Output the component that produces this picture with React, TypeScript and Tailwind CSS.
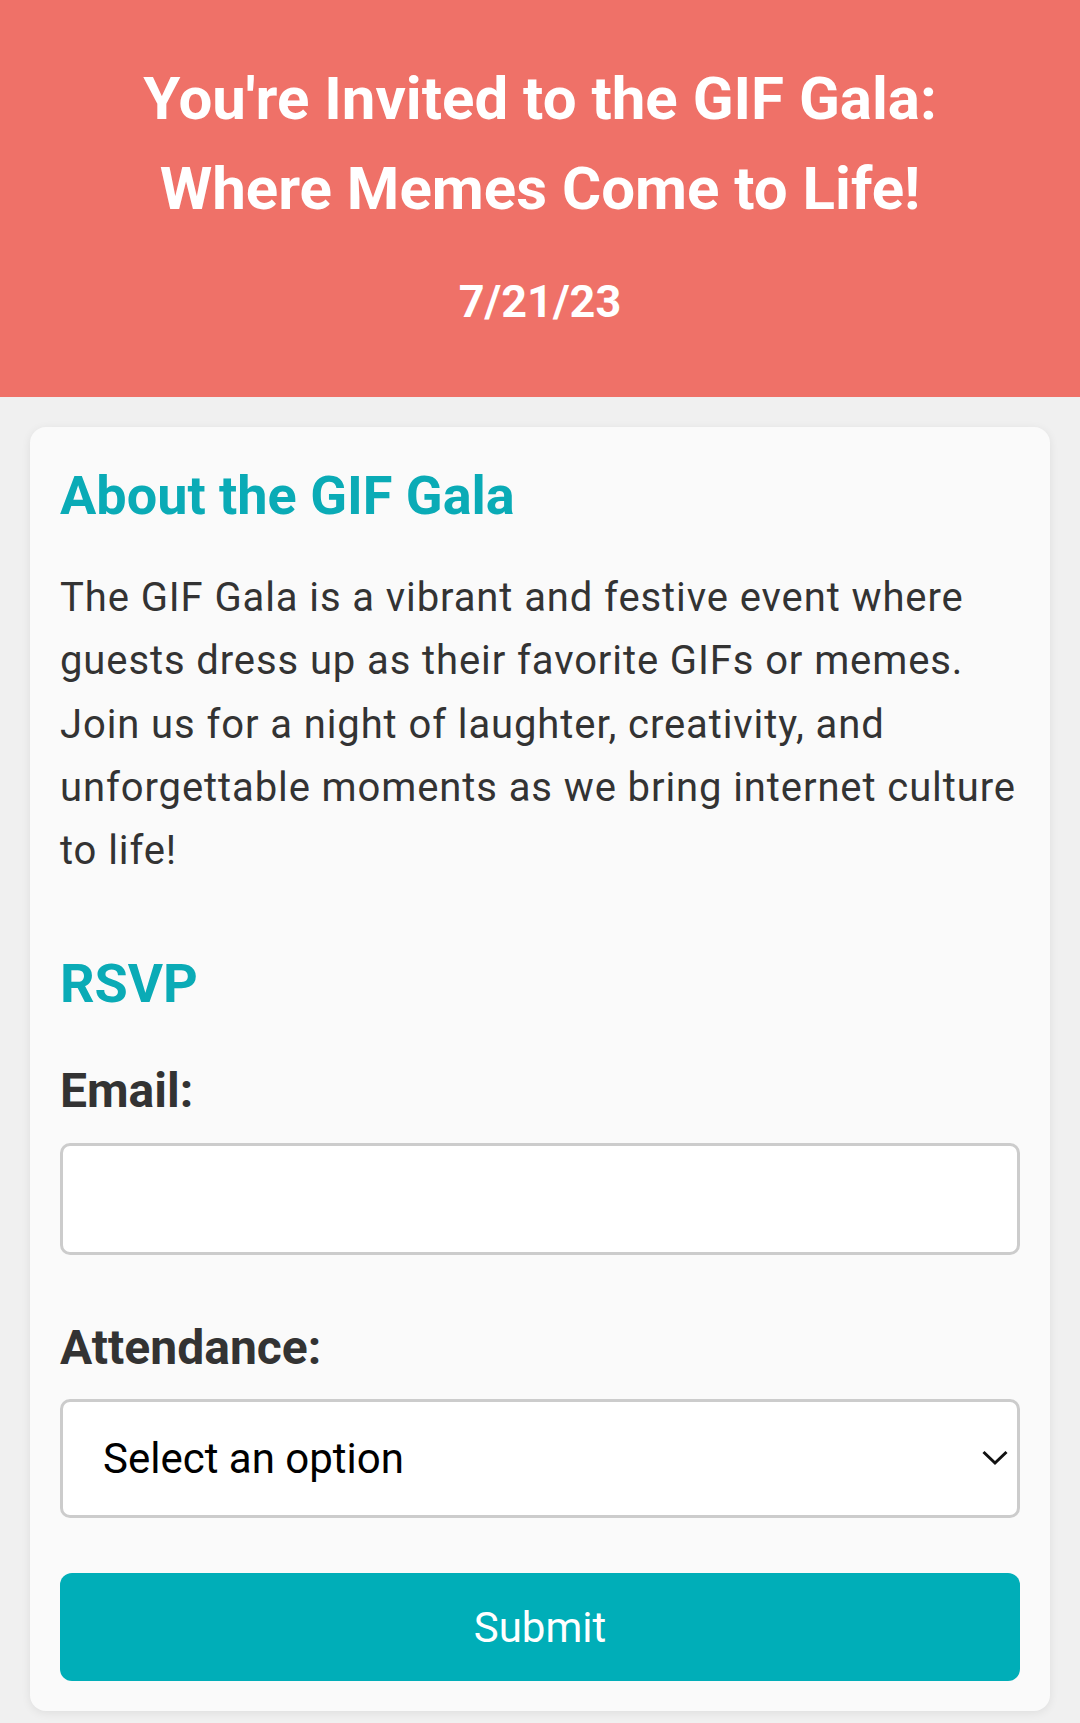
import { useState } from "react";

export default function App() {
  const [email, setEmail] = useState("");
  const [attendance, setAttendance] = useState("");

  return (
    <div className="min-h-[1723px] bg-[#f0f0f0] font-['Roboto',sans-serif]">
      <header className="bg-[#ef7168] text-center text-white pt-[54px] pb-[62px]">
        <h1 className="text-[60px] leading-[90px] font-bold">
          You're Invited to the GIF Gala:
          <br />
          Where Memes Come to Life!
        </h1>
        <p className="mt-[34px] text-[45px] leading-[67px] font-bold">7/21/23</p>
      </header>

      <main className="px-[30px] pt-[30px]">
        <div className="rounded-[16px] bg-[#fafafa] px-[30px] pt-[36px] pb-[30px] shadow-[0_2px_10px_rgba(0,0,0,0.08)]">
          <section>
            <h2 className="text-[54px] leading-[65px] font-bold text-[#0aabb6]">About the GIF Gala</h2>
            <p className="mt-[38px] text-[40px] leading-[63.3px] tracking-[0.9px] text-[#333]">
              The GIF Gala is a vibrant and festive event where guests dress up as their favorite GIFs or memes. Join us for a night of laughter, creativity, and unforgettable moments as we bring internet culture to life!
            </p>
          </section>

          <section className="mt-[69px]">
            <h2 className="text-[54px] leading-[65px] font-bold text-[#0aabb6]">RSVP</h2>
            <form className="flex flex-col" onSubmit={(e) => e.preventDefault()}>
              <label htmlFor="email" className="mt-[47px] text-[48px] leading-[56px] font-bold text-[#333]">
                Email:
              </label>
              <input
                id="email"
                type="email"
                value={email}
                onChange={(e) => setEmail(e.target.value)}
                className="mt-[24px] h-[112px] w-full rounded-[10px] border-[3px] border-[#cccccc] bg-white px-[40px] text-[42px] outline-none"
              />

              <label htmlFor="attendance" className="mt-[65px] text-[48px] leading-[56px] font-bold text-[#333]">
                Attendance:
              </label>
              <div className="relative mt-[23px]">
                <select
                  id="attendance"
                  value={attendance}
                  onChange={(e) => setAttendance(e.target.value)}
                  className="h-[119px] w-full appearance-none rounded-[10px] border-[3px] border-[#cccccc] bg-white pl-[40px] text-[42px] text-black outline-none"
                >
                  <option value="">Select an option</option>
                  <option value="yes">Yes, I'll be there!</option>
                  <option value="no">Sorry, can't make it</option>
                </select>
                <svg
                  className="pointer-events-none absolute right-[12px] top-[51px]"
                  width="26"
                  height="16"
                  viewBox="0 0 26 16"
                  fill="none"
                  stroke="#111"
                  strokeWidth="3"
                >
                  <polyline points="1.5,2 13,13 24.5,2" />
                </svg>
              </div>

              <button
                type="submit"
                className="mt-[55px] h-[108px] w-full rounded-[12px] bg-[#00aeb8] text-[42px] text-white"
              >
                Submit
              </button>
            </form>
          </section>
        </div>
      </main>
    </div>
  );
}
